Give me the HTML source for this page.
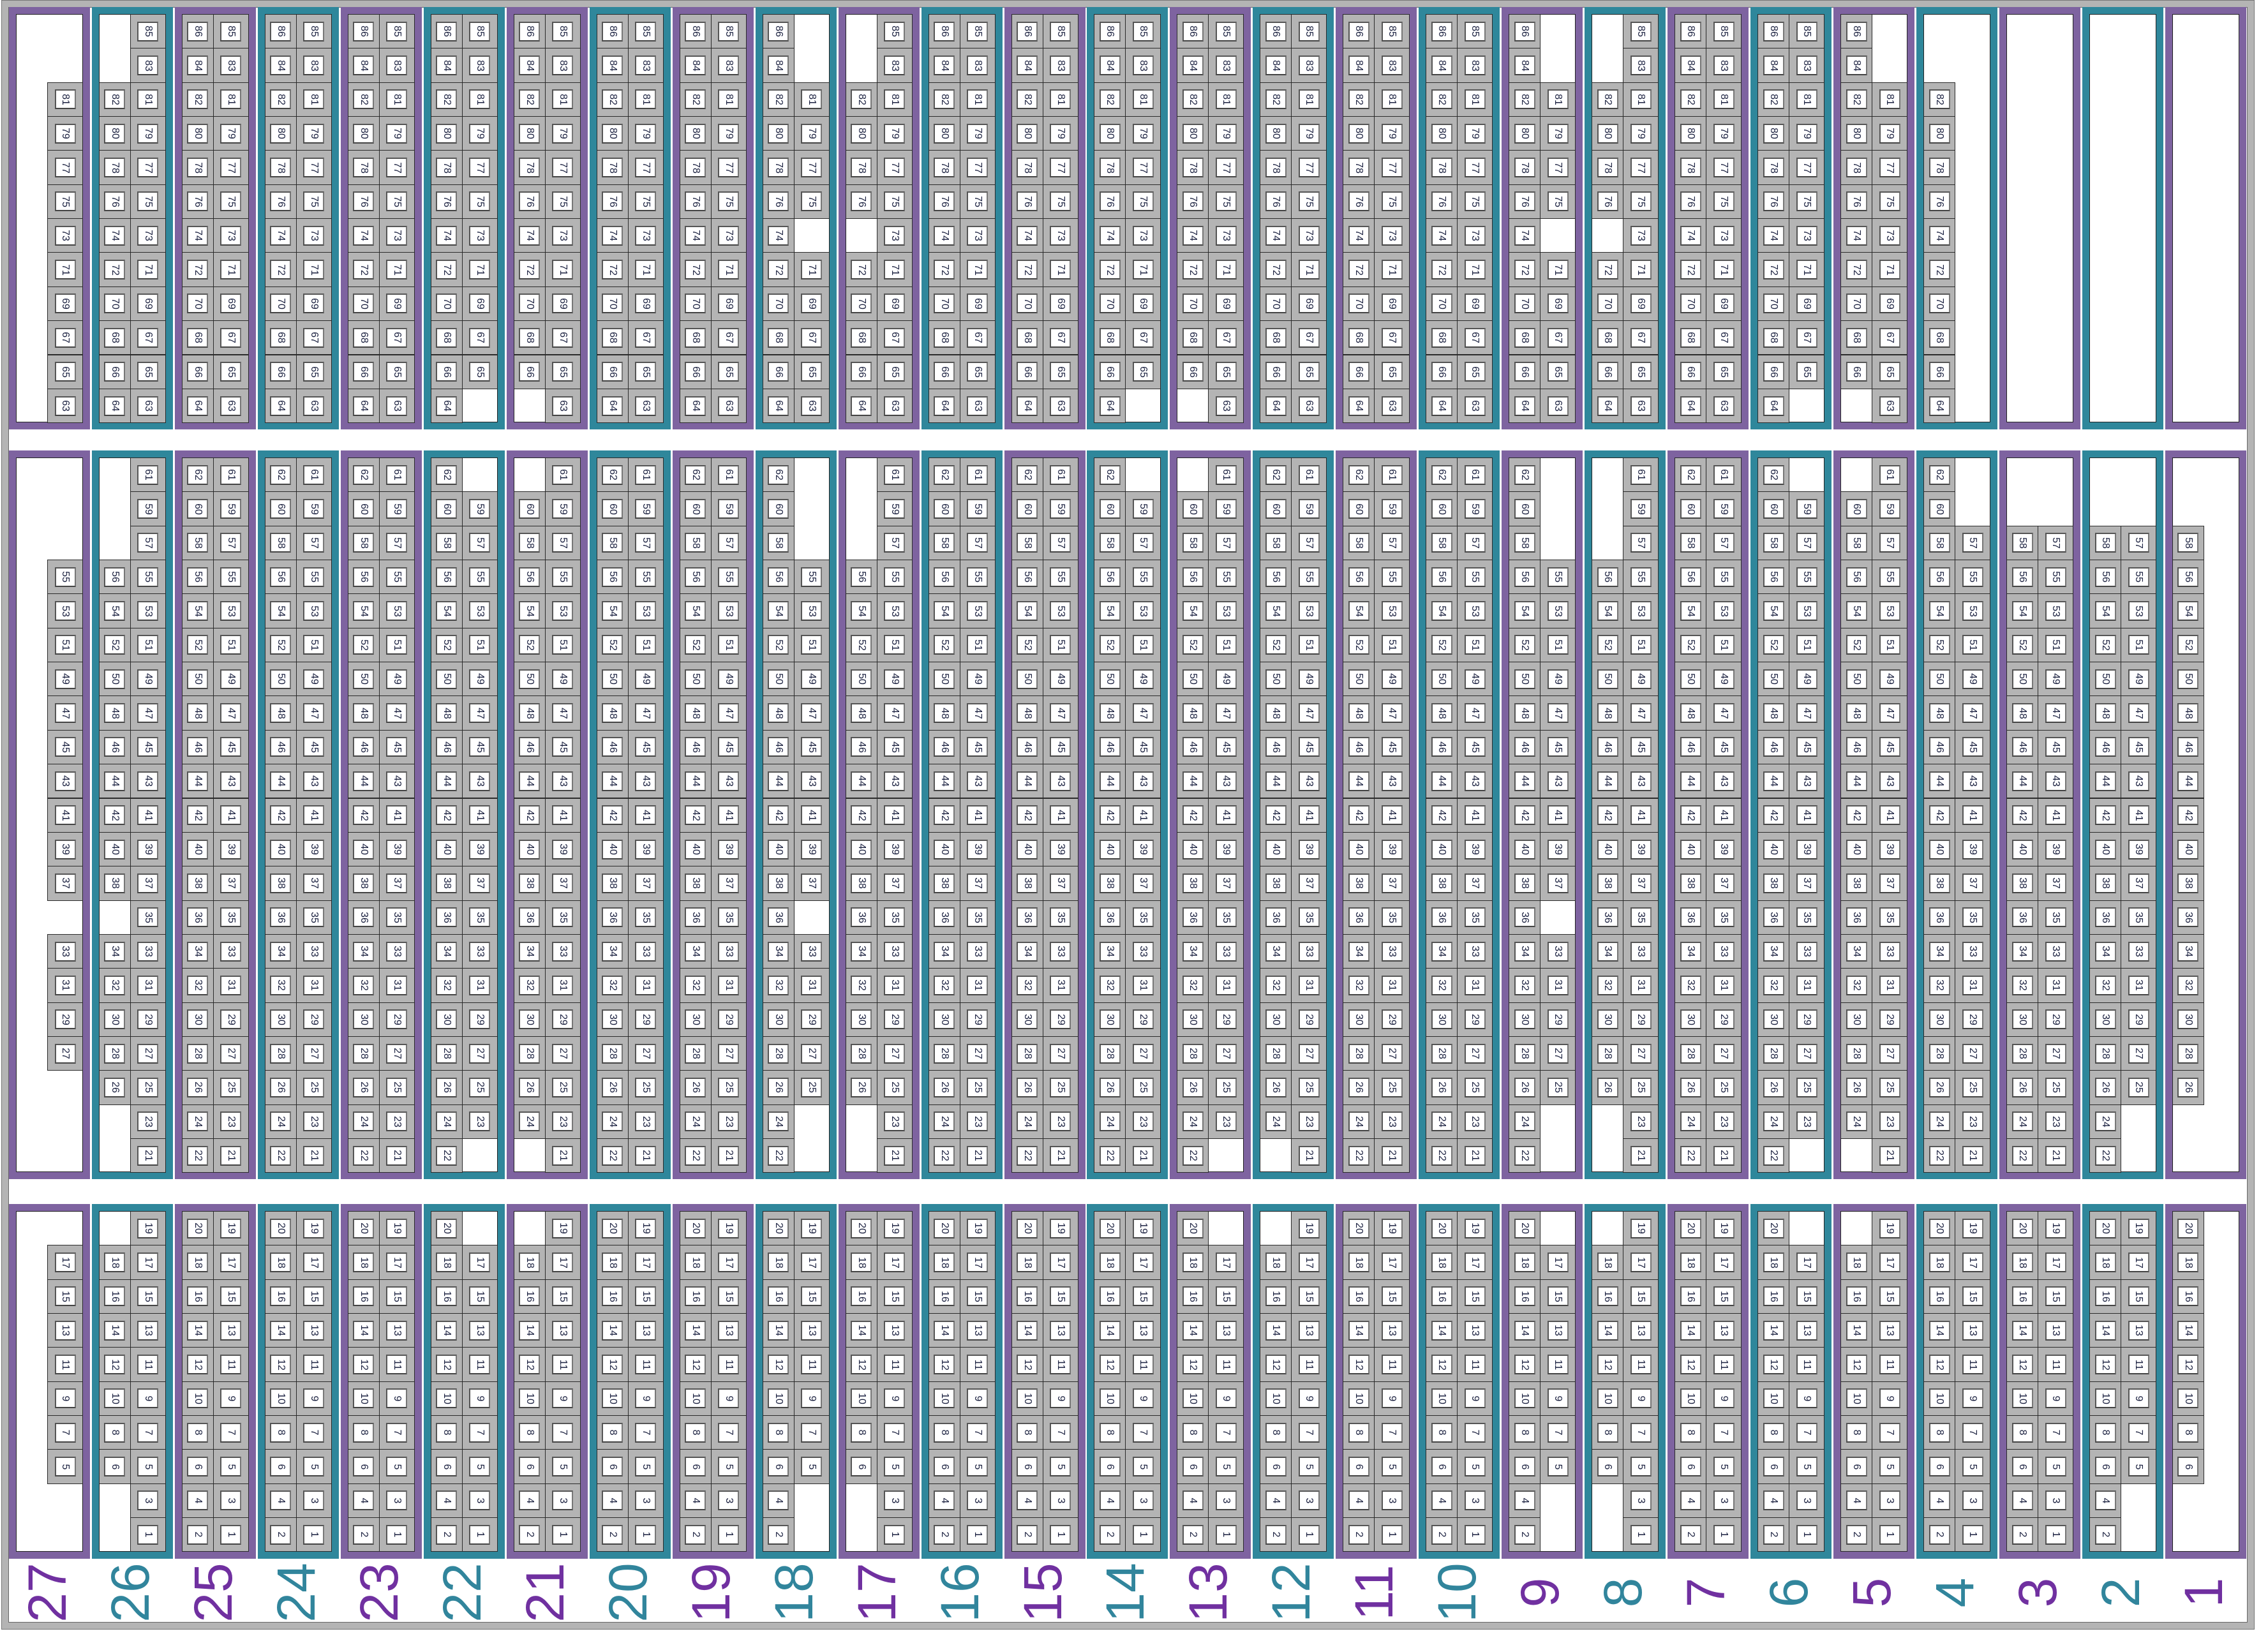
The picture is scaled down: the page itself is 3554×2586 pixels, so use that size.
<!DOCTYPE html>
<html><head><meta charset="utf-8">
<style>
html,body{margin:0;padding:0;background:#fff;}
body{width:3554px;height:2586px;position:relative;overflow:hidden;font-family:"Liberation Sans",sans-serif;}
.frame{position:absolute;left:2px;top:0;width:3531px;height:2554px;box-sizing:border-box;border:12px solid #b4b4b4;outline:1px solid #777;outline-offset:-1px;}
.frame:after{content:"";position:absolute;left:-1px;top:-1px;right:-1px;bottom:-1px;border:1px solid #666;}
.col{position:absolute;width:127px;box-sizing:border-box;border:11px solid;box-shadow:inset 0 0 0 1px #222;}
.p{border-color:#7e63a0;}
.t{border-color:#2f879b;}
.c{position:absolute;background:#b4b4b4;box-sizing:border-box;border:1px solid #2a2a2a;}
.lb{position:absolute;left:50%;top:50%;width:33px;height:31px;margin-left:-16.5px;margin-top:-15.5px;background:#fff;box-sizing:border-box;border:2px solid #555;border-right-color:#777;border-bottom-color:#444;}
.lb span{position:absolute;left:50%;top:50%;transform:translate(-50%,-50%) rotate(90deg);font-size:16px;color:#1b2140;line-height:1;white-space:nowrap;}
.big{position:absolute;top:2496px;font-size:84px;line-height:1;white-space:nowrap;transform:translate(-50%,-50%) rotate(-90deg);}
.bp{color:#7030a0;}
.bt{color:#31859c;}
</style></head><body>
<div class="frame"></div>
<div id="root"></div>
<script>
(function(){
var F=function(n){return "F".repeat(n);};
var L=function(n){return "L".repeat(n);};
var R=function(n){return "R".repeat(n);};
var top={},mid={},bot={};
for(var c=1;c<=27;c++){top[c]=F(12);mid[c]=F(21);bot[c]=F(10);}
top[27]="--"+R(10);
top[26]="RR"+F(10);
top[22]=F(11)+"L";
top[21]=F(11)+"R";
top[18]="LLFFFFLFFFFF";
top[17]="RRFFFFRFFFFF";
top[14]=F(11)+"L";
top[13]=F(11)+"R";
top[9]="LLFFFFLFFFFF";
top[8]="RRFFFFRFFFFF";
top[6]=F(11)+"L";
top[5]="LL"+F(9)+"R";
top[4]="--"+L(10);
top[3]="------------";top[2]="------------";top[1]="------------";
mid[27]="---"+R(10)+"-"+R(4)+"---";
mid[26]="RRR"+F(10)+"R"+F(5)+"RR";
mid[22]="L"+F(19)+"L";
mid[21]="R"+F(19)+"R";
mid[18]="LLL"+F(10)+"L"+F(5)+"LL";
mid[17]="RRR"+F(16)+"RR";
mid[14]="L"+F(20);
mid[13]="R"+F(19)+"L";
mid[12]=F(20)+"R";
mid[9]=mid[18];
mid[8]=mid[17];
mid[6]="L"+F(19)+"L";
mid[5]="R"+F(19)+"R";
mid[4]="LL"+F(19);
mid[3]="--"+F(19);
mid[2]="--"+F(17)+"LL";
mid[1]="--"+L(17)+"--";
bot[27]="-"+R(7)+"--";
bot[26]="R"+F(7)+"RR";
bot[22]="L"+F(9);
bot[21]="R"+F(9);
bot[18]=F(8)+"LL";
bot[17]=F(8)+"RR";
bot[13]="L"+F(9);
bot[12]="R"+F(9);
bot[9]="L"+F(7)+"LL";
bot[8]="R"+F(7)+"RR";
bot[6]="L"+F(9);
bot[5]="R"+F(9);
bot[2]=F(8)+"LL";
bot[1]=L(8)+"--";
var secs=[{top:11,rows:12,start:86,d:top},{top:706,rows:21,start:62,d:mid},{top:1887,rows:10,start:20,d:bot}];
var RH=53.35;
var h=[];
for(var k=0;k<27;k++){
  var num=27-k;
  var x=14+k*129.96;
  var cls=(num%2==1)?"p":"t";
  for(var s=0;s<3;s++){
    var S=secs[s];
    var hh=22+S.rows*RH;
    h.push('<div class="col '+cls+'" style="left:'+x.toFixed(2)+'px;top:'+S.top+'px;height:'+hh.toFixed(2)+'px"></div>');
    var code=S.d[num];
    for(var r=0;r<S.rows;r++){
      var ch=code.charAt(r);
      var y=S.top+11+r*RH;
      var ev=S.start-2*r, od=S.start-1-2*r;
      if(ch=="F"||ch=="L"){
        h.push('<div class="c" style="left:'+(x+11).toFixed(2)+'px;top:'+y.toFixed(2)+'px;width:50px;height:'+(RH+1).toFixed(2)+'px"><div class="lb"><span>'+ev+'</span></div></div>');
      }
      if(ch=="F"||ch=="R"){
        h.push('<div class="c" style="left:'+(x+60).toFixed(2)+'px;top:'+y.toFixed(2)+'px;width:56px;height:'+(RH+1).toFixed(2)+'px"><div class="lb"><span>'+od+'</span></div></div>');
      }
    }
  }
  h.push('<div class="big '+(num%2==1?"bp":"bt")+'" style="left:'+(x+60).toFixed(2)+'px">'+num+'</div>');
}
document.getElementById("root").innerHTML=h.join("");
})();
</script>
</body></html>
